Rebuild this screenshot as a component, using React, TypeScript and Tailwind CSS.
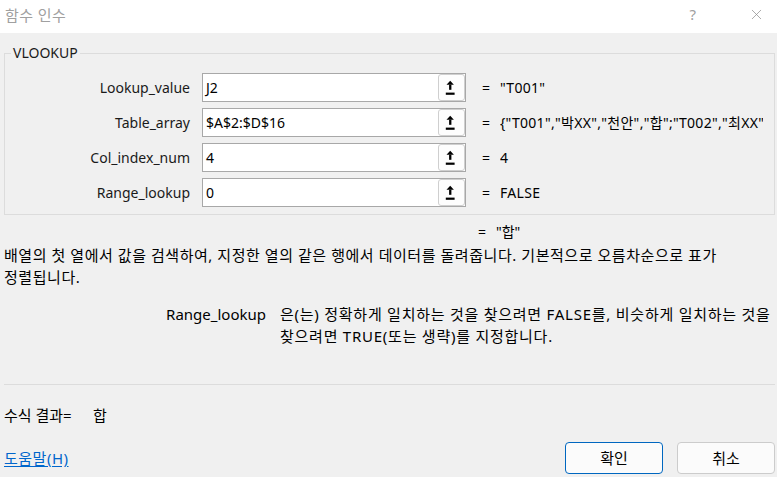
import { X } from 'lucide-react';

type Arg = { label: string; input: string; value: string };

const args: Arg[] = [
    { label: 'Lookup_value', input: 'J2', value: '"T001"' },
    { label: 'Table_array', input: '$A$2:$D$16', value: '{"T001","박XX","천안","합";"T002","최XX"' },
    { label: 'Col_index_num', input: '4', value: '4' },
    { label: 'Range_lookup', input: '0', value: 'FALSE' },
];

const font = { fontFamily: '"Noto Sans", "Noto Sans CJK KR", sans-serif' };

// Collapse-to-reference button inside each argument box
const RefButton = () => (
    <div className="w-[27px] h-full shrink-0 border border-[#cfcfcf] rounded-[3px] bg-[#fdfdfd] flex items-center justify-center">
        <svg width="25" height="27" viewBox="0 0 25 27">
            <polygon points="11.2,6.8 14.9,10.8 7.5,10.8" fill="#000" />
            <rect x="10.1" y="10.6" width="2.3" height="5.2" fill="#000" />
            <rect x="6.8" y="18.6" width="8.8" height="2.2" fill="#000" />
        </svg>
    </div>
);

export default function App() {
    return (
        <div className="w-[777px] h-[477px] bg-[#f0f0f0] overflow-hidden text-[14px] text-black" style={font}>

            {/* Title bar */}
            <div className="h-[33px] bg-white flex items-center pl-[5px] text-[#a0a0a0]">
                <span className="text-[15px] leading-[20px] mt-[-4px] tracking-[0.4px]">함수 인수</span>
                <span className="ml-auto text-[15px] mr-[52px] mt-[-4px]">?</span>
                <X size={17} strokeWidth={1} className="mr-[12px] mt-[-4px] text-[#8a8a8a]" />
            </div>

            {/* Arguments group */}
            <fieldset className="ml-[4px] mr-[2px] mt-[10px] border border-[#dcdcdc] pt-[10px] pb-[7px]">
                <legend className="ml-[6px] px-[2px] leading-[20px] text-[14px] text-[#1a1a1a]">VLOOKUP</legend>
                <div className="flex flex-col gap-[6px]">
                    {args.map((a) => (
                        <div key={a.label} className="flex items-center h-[29px]">
                            <div className="w-[185px] text-right text-[#1a1a1a]">{a.label}</div>
                            <div className="ml-[12px] w-[264px] h-full bg-white border border-[#a8a8a8] flex items-stretch">
                                <div className="flex-1 pl-[3px] leading-[27px] whitespace-nowrap">{a.input}</div>
                                <RefButton />
                            </div>
                            <div className="ml-[16px] w-[18px]">=</div>
                            <div className="w-[263px] whitespace-nowrap overflow-hidden tracking-[0.3px]">{a.value}</div>
                        </div>
                    ))}
                </div>
            </fieldset>

            {/* Function result */}
            <div className="mt-[7px] flex h-[20px] leading-[20px]">
                <span className="ml-[478px] w-[18px]">=</span>
                <span>"합"</span>
            </div>

            {/* Description */}
            <div className="mt-[2px] pl-[4px] text-[15px] leading-[22px] whitespace-nowrap tracking-[0.55px]">
                <div>배열의 첫 열에서 값을 검색하여, 지정한 열의 같은 행에서 데이터를 돌려줍니다. 기본적으로 오름차순으로 표가</div>
                <div>정렬됩니다.</div>
            </div>

            <div className="mt-[15px] flex text-[15px] leading-[22px] whitespace-nowrap">
                <div className="w-[266px] text-right">Range_lookup</div>
                <div className="ml-[14px] tracking-[0.75px]">
                    <div>은(는) 정확하게 일치하는 것을 찾으려면 FALSE를, 비슷하게 일치하는 것을</div>
                    <div>찾으려면 TRUE(또는 생략)를 지정합니다.</div>
                </div>
            </div>

            <div className="mt-[37px] ml-[4px] mr-[2px] h-px bg-[#dcdcdc]" />

            {/* Formula result */}
            <div className="mt-[20px] pl-[4px] flex text-[15px] leading-[20px]">
                <span className="w-[89px]">수식 결과=</span>
                <span>합</span>
            </div>

            {/* Footer */}
            <div className="mt-[17px] flex items-center pl-[4px] pr-[2px]">
                <a href="#" className="text-[15px] text-[#0066cc] underline underline-offset-2 tracking-[0.5px]">도움말(H)</a>
                <button className="ml-auto w-[98px] h-[32px] rounded-[4px] border border-[#0067c0] bg-[#fbfbfb] text-[15px]">확인</button>
                <button className="ml-[14px] w-[98px] h-[32px] rounded-[4px] border border-[#cccccc] bg-[#fbfbfb] text-[15px]">취소</button>
            </div>
        </div>
    );
}
